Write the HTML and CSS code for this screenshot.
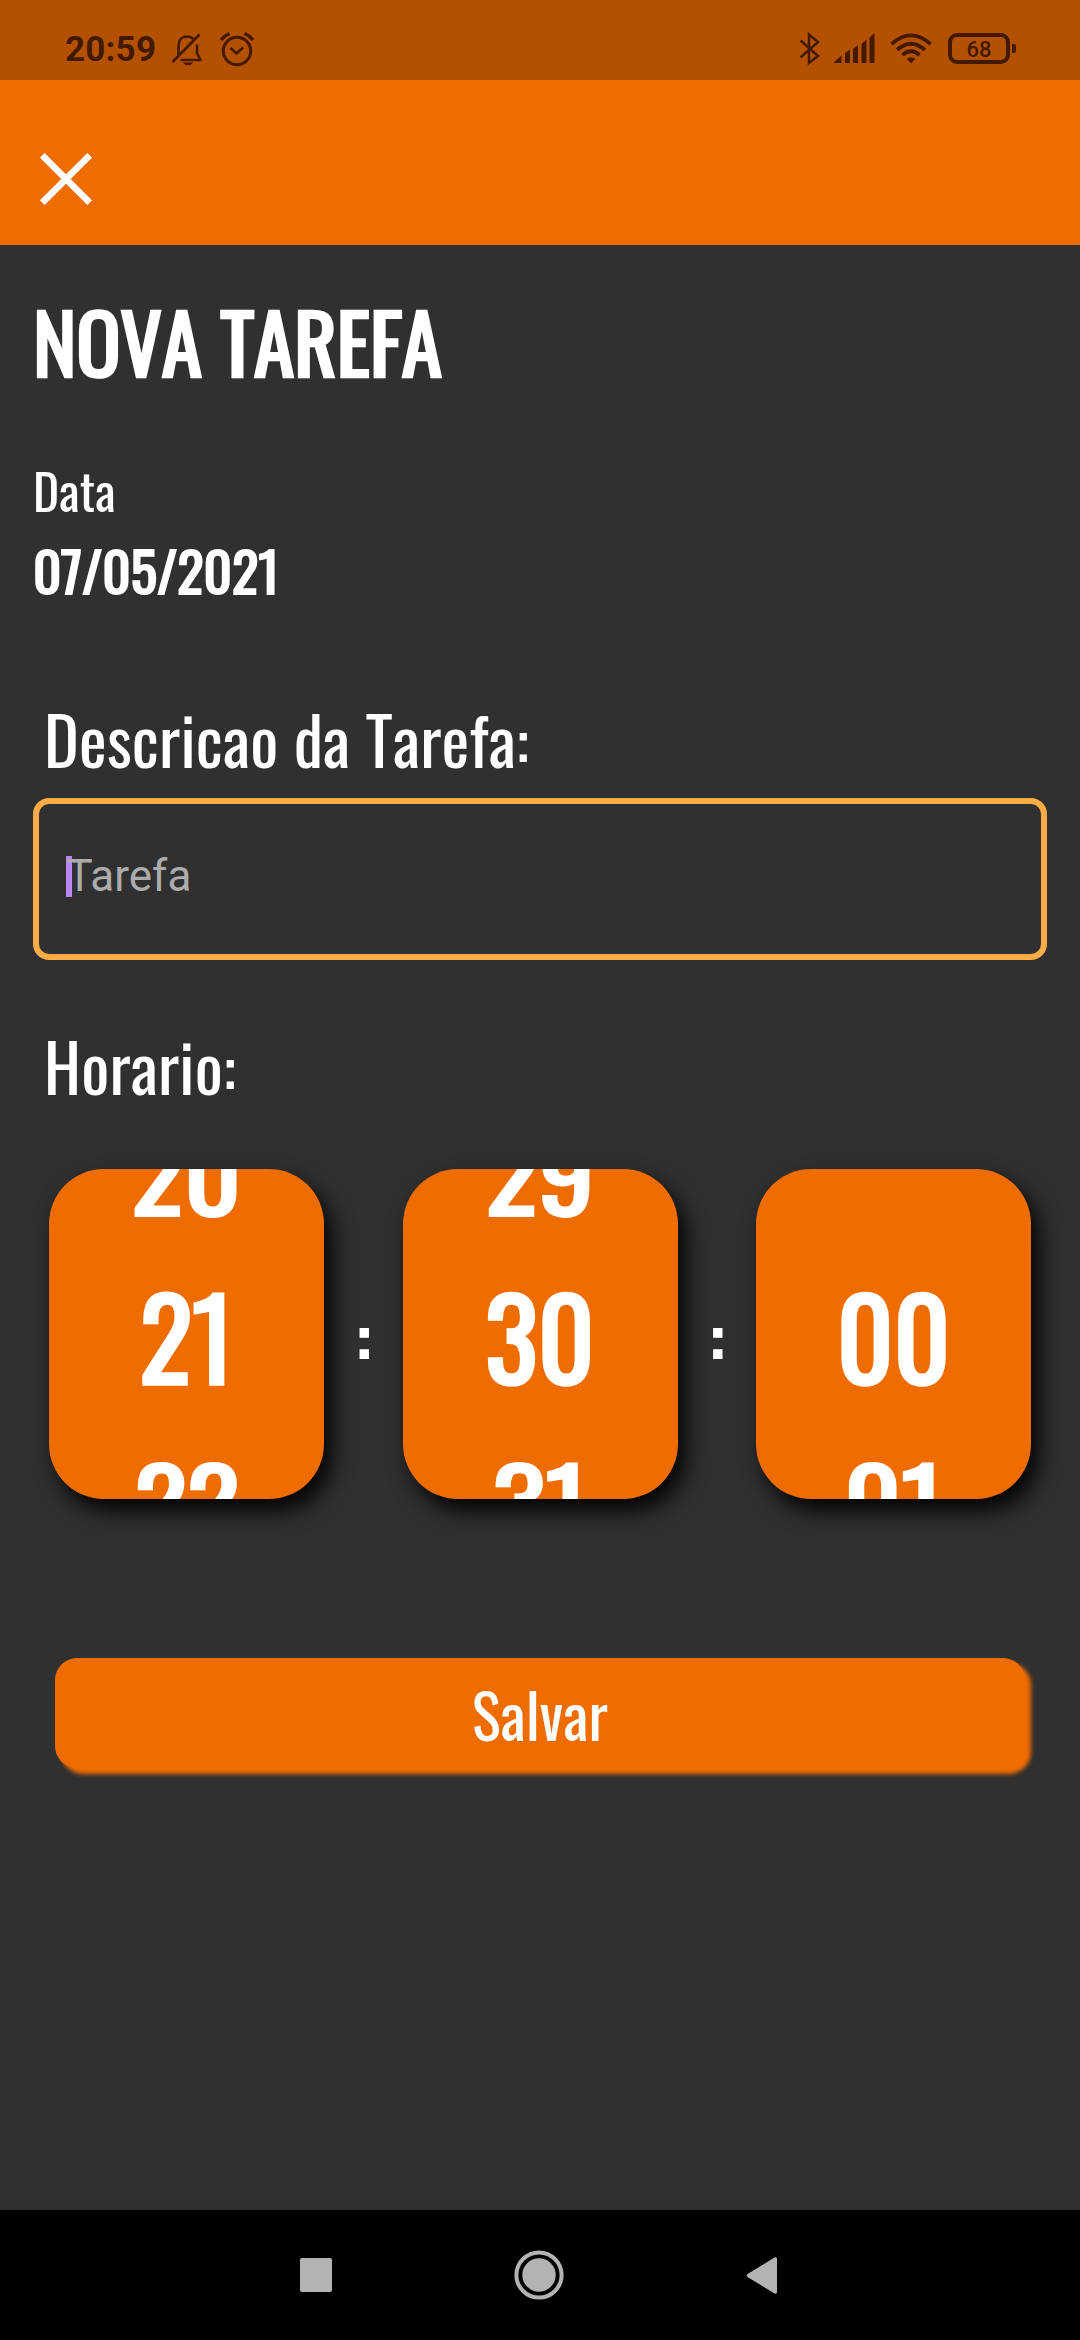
FILE: index.html
```
<!DOCTYPE html>
<html lang="pt-BR">
<head>
<meta charset="utf-8">
<title>Nova Tarefa</title>
<link rel="stylesheet" href="styles.css">
</head>
<body>
<div class="screen">
  <header class="status">
    <span class="clock">20:59</span>
    <svg class="i-bell" width="34" height="34" viewBox="0 0 34 34"><g fill="none" stroke="currentColor" stroke-width="2.6" stroke-linejoin="round"><path d="M7.5 22V13C7.5 7 11 3.5 16 3.5C19 3.5 21.500 4.700 23 7"/><path d="M26 11.500V20L29.500 27H9.500"/><path d="M1.500 29L28.500 1.500"/></g><path d="M11.500 29.500H22.500Q17 35 11.500 29.500Z" fill="currentColor"/></svg>
    <svg class="i-alarm" width="36" height="36" viewBox="0 0 36 36"><g fill="none" stroke="currentColor" stroke-width="3"><circle cx="18" cy="20" r="13.700"/><path d="M11.500 17L17.500 22.500L24 16.500" stroke-width="2.700"/><path d="M2 9Q5.500 4.500 10.500 2.500M34 9Q30.500 4.500 25.500 2.500" stroke-width="3.500"/></g></svg>
    <span class="gap"></span>
    <svg class="i-bt" width="22" height="34" viewBox="0 0 22 34"><path d="M1.500 8.500L19 24L10 31V2.500L19 10L1.500 25.500" fill="none" stroke="currentColor" stroke-width="2.500"/></svg>
    <svg class="i-signal" width="41" height="31" viewBox="0 0 41 31"><path d="M0 30V29L7.500 22.500V30ZM11 30V20L16 16.500V30ZM19 30V16L24 12V30ZM27.500 30V11L32.500 6.500V30ZM35.500 30V4.500L40.500 0V30Z" fill="currentColor"/></svg>
    <svg class="i-wifi" width="42" height="31" viewBox="0 0 44 32"><g fill="none" stroke="currentColor" stroke-width="4"><path d="M1.500 11.500Q22-7 42.500 11.500"/><path d="M7.500 17.500Q22 4.500 36.500 17.500"/><path d="M13 23Q22 15 31 23"/></g><path d="M17.500 27Q22 23.500 26.500 27L22 31.500Z" fill="currentColor"/></svg>
    <span class="battery">68</span><span class="tip"></span>
  </header>
  <nav class="appbar">
    <svg width="52" height="52" viewBox="0 0 52 52"><path d="M2.300 2.300L49.700 49.700M49.700 2.300L2.300 49.700" stroke="#fff" stroke-width="6.600"/></svg>
  </nav>
  <main class="page">
    <h1 class="title">NOVA TAREFA</h1>
    <div class="label">Data</div>
    <div class="date">07/05/2021</div>
    <div class="heading">Descricao da Tarefa:</div>
    <div class="field"><span class="caret"></span><span class="hint">Tarefa</span></div>
    <div class="heading hours">Horario:</div>
    <div class="wheels">
      <div class="wheel"><span class="near">20</span><span class="now">21</span><span class="near">22</span></div>
      <span class="colon">:</span>
      <div class="wheel"><span class="near">29</span><span class="now">30</span><span class="near">31</span></div>
      <span class="colon">:</span>
      <div class="wheel"><span class="near"></span><span class="now">00</span><span class="near">01</span></div>
    </div>
    <div class="save">Salvar</div>
  </main>
  <footer class="keys">
    <svg width="32" height="34" viewBox="0 0 32 34"><rect width="32" height="34" rx="2" fill="#b3b3b3"/></svg>
    <svg width="50" height="50" viewBox="0 0 50 50"><circle cx="25" cy="25" r="22.600" fill="none" stroke="#b3b3b3" stroke-width="4"/><circle cx="25" cy="25" r="16.700" fill="#b3b3b3"/></svg>
    <svg width="32" height="37" viewBox="0 0 32 37"><path d="M1.500 17Q0 18.500 1.500 20L28.500 36.500Q31 37.500 31 35V2Q31-.5 28.500.5Z" fill="#b3b3b3"/></svg>
  </footer>
</div>
</body>
</html>
```
FILE: styles.css
```
* { box-sizing: border-box; }
body { margin: 0; background: #303030; }
svg { display: block; flex: none; }
.screen {
  width: 1080px;
  height: 2340px;
  display: flex;
  flex-direction: column;
  background: #303030;
  color: #fff;
  font-family: Oswald, "Liberation Sans", sans-serif;
  font-kerning: none;
  overflow: hidden;
}
.status {
  height: 80px;
  display: flex;
  align-items: flex-start;
  padding: 0 64px 0 65px;
  background: #b35100;
  color: #431a00;
  font-family: Roboto, sans-serif;
}
.clock {
  width: 106px;
  margin-top: 29px;
  font-size: 35px;
  line-height: 42px;
  font-weight: 700;
  letter-spacing: .2px;
}
.i-bell { margin-top: 33px; }
.i-alarm { margin: 31px 0 0 14px; }
.gap { flex: 1; }
.i-bt { margin-top: 32px; }
.i-signal { margin: 33px 0 0 13px; }
.i-wifi { margin: 33px 0 0 15px; }
.battery {
  width: 62px;
  height: 31px;
  margin: 33px 0 0 16px;
  border: 4px solid;
  border-radius: 9px;
  font-size: 22px;
  line-height: 26px;
  font-weight: 500;
  text-align: center;
}
.tip { width: 4px; height: 9px; margin: 44px 0 0 2px; background: currentColor; border-radius: 0 2px 2px 0; }
.appbar { height: 165px; padding: 73px 40px 0; background: #ef6c00; }
.page { flex: 1; padding: 34px 33px 0; }
.title, .date, .now, .near, .colon { -webkit-text-stroke: currentColor; font-weight: 400; }
.title { margin: 0; font-size: 82.5px; line-height: 122px; letter-spacing: -.4px; -webkit-text-stroke-width: 2.6px; }
.label { margin-top: 52px; font-size: 49.5px; line-height: 73px; letter-spacing: .2px; }
.date { margin-top: 3px; font-size: 55px; line-height: 81px; font-kerning: normal; -webkit-text-stroke-width: 1.9px; }
.heading { margin: 79px 0 0 11px; font-size: 66px; line-height: 98px; letter-spacing: .18px; }
.field {
  height: 162px;
  margin-top: 11px;
  padding: 0 27px;
  display: flex;
  align-items: center;
  border: 6px solid #fbac47;
  border-radius: 16px;
  font-family: Roboto, sans-serif;
  font-kerning: auto;
}
.caret { width: 5.5px; height: 41px; margin: -5px -5px 0 0; background: #bb86fc; }
.hint { font-size: 44px; line-height: 52px; margin-top: -6px; color: #acacac; }
.hours { margin-top: 56px; }
.wheels { display: flex; margin: 55px 16px 0; }
.wheel {
  width: 275px;
  height: 330px;
  display: flex;
  flex-direction: column;
  align-items: center;
  justify-content: center;
  background: #ef6c00;
  border-radius: 55px;
  overflow: hidden;
  box-shadow: 8px 12px 22px rgba(0, 0, 0, .95);
}
.now, .near { flex: none; height: 163px; font-size: 110px; line-height: 163px; -webkit-text-stroke-width: 3.4px; }
.near { transform: scaleY(.87); }
.colon { width: 78.5px; padding-top: 116px; text-align: center; font-size: 66px; line-height: 98px; -webkit-text-stroke-width: 2.2px; }
.save {
  width: 970px;
  height: 110px;
  margin: 159px 0 0 22px;
  background: #ef6c00;
  border-radius: 22px;
  box-shadow: 6px 5.5px 4px #ef6c00;
  font-size: 60.5px;
  line-height: 111px;
  letter-spacing: .25px;
  text-align: center;
}
.keys {
  height: 130px;
  display: flex;
  justify-content: space-between;
  align-items: center;
  padding: 0 302px 0 300px;
  background: #000;
}
```
